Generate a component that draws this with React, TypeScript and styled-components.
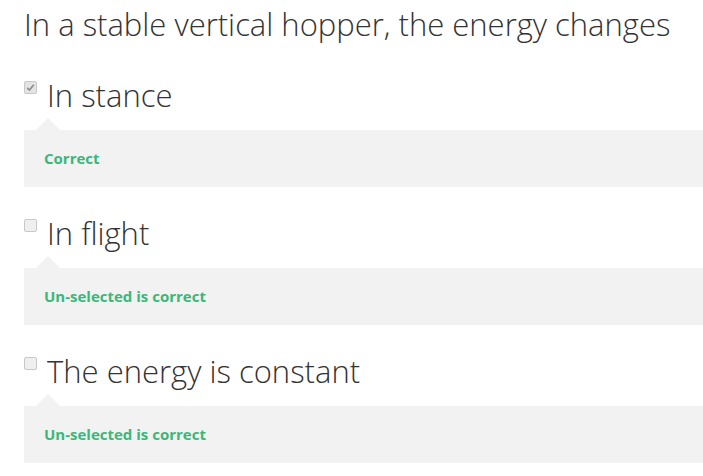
import React from "react";
import styled, { createGlobalStyle } from "styled-components";

const GlobalStyle = createGlobalStyle`
  html, body {
    margin: 0;
    padding: 0;
    background: #ffffff;
  }
  body {
    font-family: "Open Sans", "Liberation Sans", sans-serif;
  }
`;

type Choice = {
  label: string;
  checked: boolean;
  feedback: string;
};

const choices: Choice[] = [
  { label: "In stance", checked: true, feedback: "Correct" },
  { label: "In flight", checked: false, feedback: "Un-selected is correct" },
  { label: "The energy is constant", checked: false, feedback: "Un-selected is correct" },
];

const Quiz: React.FunctionComponent = () => {
  return (
    <StyledQuiz>
      <Question>In a stable vertical hopper, the energy changes</Question>
      <ChoiceList>
        {choices.map((c) => (
          <ChoiceItem key={c.label}>
            <ChoiceRow>
              <Box $checked={c.checked}>
                {c.checked && (
                  <svg width="9" height="9" viewBox="0 0 9 9">
                    <path d="M1.2 4.8 L3.5 7 L7.8 1.8" fill="none" stroke="#8a8a8a" strokeWidth="1.6" />
                  </svg>
                )}
              </Box>
              <ChoiceLabel>{c.label}</ChoiceLabel>
            </ChoiceRow>
            <Feedback>{c.feedback}</Feedback>
          </ChoiceItem>
        ))}
      </ChoiceList>
    </StyledQuiz>
  );
};

export default function App() {
  return (
    <>
      <GlobalStyle />
      <Quiz />
    </>
  );
}

const StyledQuiz = styled.div`
  padding: 4px 0 0 24px;
  color: #333333;
`;

const Question = styled.h2`
  margin: 0 0 31px;
  font-size: 31px;
  font-weight: 300;
  line-height: 40px;
  white-space: nowrap;
`;

const ChoiceList = styled.div`
  display: flex;
  flex-direction: column;
  gap: 26px;
`;

const ChoiceItem = styled.div`
  display: flex;
  flex-direction: column;
`;

const ChoiceRow = styled.label`
  display: flex;
  align-items: flex-start;
  gap: 10px;
  margin-bottom: 15px;
`;

const Box = styled.span<{ $checked: boolean }>`
  box-sizing: border-box;
  flex: none;
  display: flex;
  align-items: center;
  justify-content: center;
  width: 13px;
  height: 13px;
  margin-top: 6px;
  border: 1px solid #c8c8c8;
  border-radius: 2px;
  background: ${(p) => (p.$checked ? "#e4e4e4" : "#efefef")};
`;

const ChoiceLabel = styled.span`
  font-size: 31px;
  font-weight: 300;
  line-height: 40px;
`;

const Feedback = styled.div`
  position: relative;
  padding: 20px;
  background: #f2f2f2;
  color: #3ab77a;
  font-size: 15px;
  font-weight: 700;
  line-height: 17px;

  &::before {
    content: "";
    position: absolute;
    left: 12px;
    top: -12px;
    border-left: 12px solid transparent;
    border-right: 12px solid transparent;
    border-bottom: 12px solid #f2f2f2;
  }
`;
